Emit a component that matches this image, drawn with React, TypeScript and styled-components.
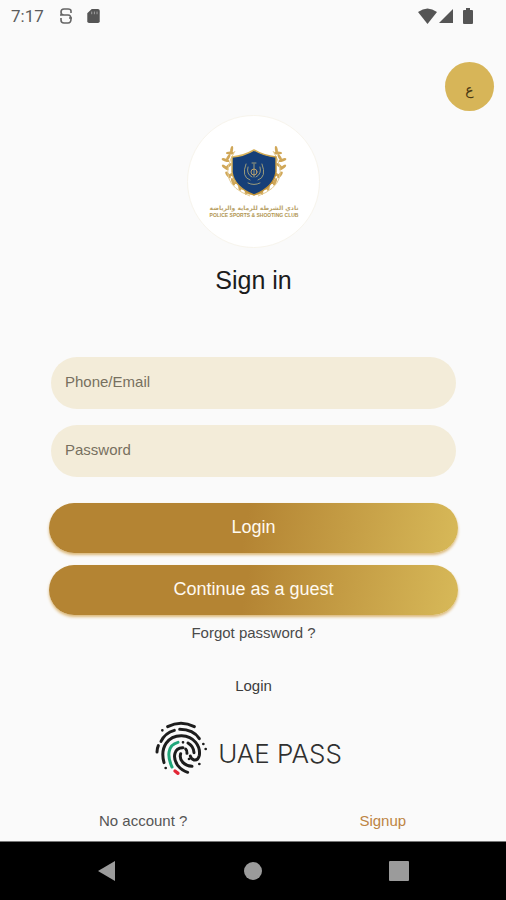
import React from "react";
import styled, { createGlobalStyle } from "styled-components";

const GlobalStyle = createGlobalStyle`
  * { box-sizing: border-box; }
  body { margin: 0; background: #fafafa; }
  button, input { font: inherit; }
`;

const Screen = styled.div`
  min-height: 100vh;
  display: flex;
  flex-direction: column;
  background: #fafafa;
  color: #3c3c3c;
  font: 15px/20px "Liberation Sans", Arial, sans-serif;
`;

const StatusBar = styled.header`
  display: flex;
  align-items: center;
  justify-content: space-between;
  height: 32px;
  padding: 0 33px 0 11px;
  color: #5c5c5c;
  font: 17px/20px Roboto, sans-serif;
`;

const StatusGroup = styled.div<{ $gap: number }>`
  display: flex;
  align-items: center;
  gap: ${(p) => p.$gap}px;
`;

const TopActions = styled.div`
  display: flex;
  justify-content: flex-end;
  padding: 30px 12px 0;
`;

const LanguageButton = styled.button`
  width: 49px;
  height: 49px;
  padding: 6px 0 0;
  border: 0;
  border-radius: 50%;
  background: #d7b558;
  color: #4a3814;
  font: 14px/20px "DejaVu Sans", sans-serif;
`;

const Main = styled.main`
  flex: 1;
  display: flex;
  flex-direction: column;
  align-items: center;
  padding: 4px 48px 0 49px;
`;

const Badge = styled.div`
  display: flex;
  flex-direction: column;
  align-items: center;
  width: 133px;
  height: 133px;
  padding-top: 29px;
  border: 1px solid #f7f4ec;
  border-radius: 50%;
  background: #fff;
`;

const Title = styled.h1`
  margin: 16px 0 0;
  color: #1c1c1c;
  font-size: 25px;
  line-height: 32px;
  font-weight: 400;
`;

const Form = styled.form`
  width: 100%;
  margin-top: 61px;
  display: flex;
  flex-direction: column;
`;

const Field = styled.input`
  height: 52px;
  margin: 0 2px 16px;
  padding: 0 14px 4px;
  border: 0;
  border-radius: 26px;
  outline: 0;
  background: #f3ecd9;
  color: #3c3c3c;
  &::placeholder { color: #77705f; opacity: 1; }
`;

const Actions = styled.div`
  display: flex;
  flex-direction: column;
  gap: 12px;
  margin-top: 10px;
`;

const GoldButton = styled.button`
  height: 50px;
  padding: 0 0 2px;
  border: 0;
  border-radius: 25px;
  background: linear-gradient(100deg, #b48433 48%, #d6b757 98%);
  box-shadow: 0 2px 3px #dcb878;
  color: #fffaf0;
  font-size: 18px;
  line-height: 24px;
`;

const ForgotLink = styled.a`
  margin-top: 8px;
  color: #4a4a4a;
  text-decoration: none;
`;

const PassLabel = styled.p`
  margin: 33px 0 0;
  color: #3c3c3c;
`;

const PassButton = styled.button`
  display: flex;
  align-items: center;
  gap: 9px;
  margin-top: 23px;
  padding: 0 12px 0 0;
  border: 0;
  background: none;
  color: #303030;
`;

const PassName = styled.span`
  padding-top: 12px;
  font: 300 26px/32px Inter, sans-serif;
`;

const SignupRow = styled.div`
  display: grid;
  grid-template-columns: 1fr 1fr;
  align-items: center;
  width: 100%;
  margin-top: 34px;
  padding: 0 0 0 50px;
  color: #555;
`;

const SignupLink = styled.a`
  justify-self: center;
  padding-left: 29px;
  color: #bd8443;
  text-decoration: none;
`;

const NavBar = styled.nav`
  display: grid;
  grid-template-columns: repeat(3, 1fr);
  align-items: center;
  height: 59px;
  padding: 0 34px;
  border-top: 1px solid #777;
  background: #000;
`;

const NavButton = styled.button`
  display: flex;
  justify-content: center;
  padding: 0;
  border: 0;
  background: none;
`;

const leaves = [
  [26, 49, 60], [20, 45, 50], [14, 40, 36], [10, 33, 18], [8, 25, 2], [9, 17, -16], [14, 9, -36],
];

const laurel = (
  <>
    {leaves.map(([x, y, r]) => (
      <g key={y} transform={`translate(${x} ${y}) rotate(${r})`}>
        <ellipse cx="-3" cy="-1" rx="4" ry="1.5" transform="rotate(35)" />
        <ellipse cx="4" cy="-2" rx="3.8" ry="1.4" transform="rotate(-45)" />
      </g>
    ))}
    <path d="M31 51Q-4 38 16 6" fill="none" stroke="#e4cb92" />
  </>
);

function ClubLogo() {
  return (
    <svg width="96" height="76" viewBox="0 0 96 76" role="img" aria-label="Police Sports and Shooting Club">
      <defs>
        <linearGradient id="gold" x1="0" y1="0" x2="1" y2="1">
          <stop offset="0" stopColor="#e0bd66" />
          <stop offset="1" stopColor="#b78529" />
        </linearGradient>
      </defs>
      <g fill="#d0a758">
        <g transform="translate(13 0)">{laurel}</g>
        <g transform="translate(83 0) scale(-1 1)">{laurel}</g>
      </g>
      <path d="M26 12Q38 11 48 5Q58 11 70 12V27Q68 42 48 50Q28 42 26 27Z" fill="#163f78" stroke="url(#gold)" strokeWidth="1.5" />
      <g fill="none" stroke="#9c9c7b" strokeLinecap="round">
        <path d="M40 19Q35 32 44 35M56 19Q61 32 52 35M42 22Q40 29 46 32M54 22Q56 29 50 32" />
        <path d="M48 19v13M46 18h4M42 38q6 3 12 0" />
        <circle cx="48" cy="27" r="3" stroke="#c0a26b" />
      </g>
      <text x="48" y="65" textAnchor="middle" fill="#b9a268" fontFamily="DejaVu Sans, sans-serif" fontSize="6" fontWeight="700">نادي الشرطة للرماية والرياضة</text>
      <text x="48" y="72" textAnchor="middle" fill="#b09550" fontFamily="Liberation Sans, sans-serif" fontSize="5" fontWeight="700">POLICE SPORTS &amp; SHOOTING CLUB</text>
    </svg>
  );
}

function Fingerprint() {
  return (
    <svg width="56" height="58" viewBox="22 20 168 174" fill="none" stroke="#1d1d1d" strokeWidth="9" strokeLinecap="round" aria-hidden="true">
      <path d="M66 43Q106 22 146 43" />
      <path d="M46 87Q58 62 86 54M102 51Q143 51 161 79" />
      <path d="M38 100Q34 109 34 119" />
      <path d="M55 151C42 104 68 69 108 70C146 71 165 103 161 129Q157 145 145 143Q136 140 134 131" />
      <path d="M97 90C65 98 64 132 79 164" stroke="#20a77a" />
      <path d="M88 176l9 7" stroke="#e32636" strokeWidth="10" />
      <path d="M127 92Q144 102 145 121" />
      <path d="M112 106C86 105 79 135 96 159Q109 175 126 180" />
      <path d="M105 124C99 145 117 160 139 162" />
      <path d="M120 110Q125 115 124 123" />
      <path d="M50 54h.1M112 90h.1M173 95h.1M180 110h.1M130 140h.1M60 167h.1M161 155h.1" strokeWidth="8" />
    </svg>
  );
}

export default function App() {
  return (
    <>
      <GlobalStyle />
      <Screen>
        <StatusBar>
          <StatusGroup $gap={15}>
            <span>7:17</span>
            <StatusGroup $gap={14}>
              <svg width="14" height="18" viewBox="0 0 14 18" fill="none" stroke="#666" strokeWidth="1.6" aria-hidden="true">
                <path d="M12 6V4Q12 2 9 2H5Q2 2 2 5T5 8H9Q12 8 12 12T9 16H5Q2 16 2 13V11M1 8H4M10 11H13" />
              </svg>
              <svg width="13" height="16" viewBox="0 0 14 18" fill="#555" aria-hidden="true">
                <path d="M5 1h7q2 0 2 2v12q0 2-2 2H2q-2 0-2-2V6z" />
                <path d="M5 4v3M8 4v3M11 4v3" stroke="#aaa" />
              </svg>
            </StatusGroup>
          </StatusGroup>
          <StatusGroup $gap={1}>
            <svg width="19" height="16" viewBox="0 0 19 16" fill="#555" aria-hidden="true"><path d="M0 4Q9.500-3 19 4L9.500 16Z" /></svg>
            <svg width="16" height="16" viewBox="0 0 16 16" fill="#555" aria-hidden="true"><path d="M15 1V15H1Z" /></svg>
            <svg width="18" height="16" viewBox="0 0 18 16" fill="#555" aria-hidden="true"><path d="M11 0h4v2h2q1 0 1 1v12q0 1-1 1H9q-1 0-1-1V3q0-1 1-1h2z" /></svg>
          </StatusGroup>
        </StatusBar>
        <TopActions>
          <LanguageButton type="button" lang="ar" aria-label="العربية">ع</LanguageButton>
        </TopActions>
        <Main>
          <Badge><ClubLogo /></Badge>
          <Title>Sign in</Title>
          <Form onSubmit={(e) => e.preventDefault()}>
            <Field type="text" aria-label="Phone/Email" placeholder="Phone/Email" />
            <Field type="password" aria-label="Password" placeholder="Password" />
            <Actions>
              <GoldButton type="submit">Login</GoldButton>
              <GoldButton type="button">Continue as a guest</GoldButton>
            </Actions>
          </Form>
          <ForgotLink href="#forgot">Forgot password ?</ForgotLink>
          <PassLabel>Login</PassLabel>
          <PassButton type="button">
            <Fingerprint />
            <PassName>UAE PASS</PassName>
          </PassButton>
          <SignupRow>
            <span>No account ?</span>
            <SignupLink href="#signup">Signup</SignupLink>
          </SignupRow>
        </Main>
        <NavBar>
          <NavButton type="button" aria-label="Back">
            <svg width="20" height="22" viewBox="0 0 20 22" fill="#9b9b9b"><path d="M18 1V21L1 11Z" /></svg>
          </NavButton>
          <NavButton type="button" aria-label="Home">
            <svg width="20" height="20" viewBox="0 0 20 20" fill="#9b9b9b"><circle cx="10" cy="10" r="9" /></svg>
          </NavButton>
          <NavButton type="button" aria-label="Recent apps">
            <svg width="20" height="20" viewBox="0 0 20 20" fill="#9b9b9b"><rect width="20" height="20" rx="1" /></svg>
          </NavButton>
        </NavBar>
      </Screen>
    </>
  );
}
